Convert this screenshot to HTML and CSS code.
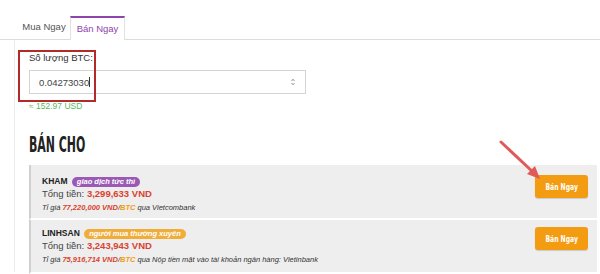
FILE: index.html
```html
<!DOCTYPE html>
<html lang="vi">
<head>
    <meta charset="UTF-8">
    <title>Bán Ngay</title>
    <link rel="stylesheet" href="styles.css">
</head>
<body>

<div class="tabs">
    <div class="tab">Mua Ngay</div>
    <div class="tab active">Bán Ngay</div>
</div>

<div class="panel">
    <div class="amount">
        <label for="btc-amount">Số lượng BTC:</label>
        <div class="input-box">
            <span class="value">0.04273030<span class="caret"></span></span>
            <span class="spinner">
                <svg width="4" height="8" viewBox="0 0 4 8"><path d="M0.5 3 L2 1.2 L3.5 3 M0.5 5 L2 6.8 L3.5 5" fill="none" stroke="#888" stroke-width="0.9"/></svg>
            </span>
        </div>
        <div class="usd">≈ 152.97 USD</div>
    </div>

    <h2><span>BÁN CHO</span></h2>

    <div class="offer">
        <div class="offer-info">
            <div class="name">KHAM <span class="badge purple">giao dịch tức thì</span></div>
            <div class="total">Tổng tiền: <b>3,299,633 VND</b></div>
            <div class="rate">Tỉ giá <b class="red">77,220,000 VND</b>/<b class="orange">BTC</b> qua Vietcombank</div>
        </div>
        <button><span>Bán Ngay</span></button>
    </div>

    <div class="offer">
        <div class="offer-info">
            <div class="name">LINHSAN <span class="badge yellow">người mua thường xuyên</span></div>
            <div class="total">Tổng tiền: <b>3,243,943 VND</b></div>
            <div class="rate">Tỉ giá <b class="red">75,916,714 VND</b>/<b class="orange">BTC</b> qua Nộp tiền mặt vào tài khoản ngân hàng: Vietinbank</div>
        </div>
        <button><span>Bán Ngay</span></button>
    </div>
</div>

<!-- annotations drawn over the page -->
<div class="mark-box"></div>
<svg class="mark-arrow" width="60" height="60" viewBox="0 0 60 60">
    <line x1="9" y1="9" x2="42" y2="40" stroke="#e05a5a" stroke-width="3" stroke-linecap="round"/>
    <polygon points="48,46 35,41 43,33" fill="#e05a5a"/>
</svg>

</body>
</html>
```

FILE: styles.css
```css
body {
    margin: 0;
    font-family: "Liberation Sans", Arial, sans-serif;
    color: #333;
    background: #fff;
    position: relative;
    height: 274px;
    overflow: hidden;
}
.tabs {
    display: flex;
    margin-top: 16px;
    padding-left: 14px;
    border-bottom: 1px solid #dcdcdc;
    height: 23px;
}
.tab {
    width: 52px;
    padding-left: 4px;
    font-size: 9.5px;
    color: #555;
    text-align: center;
    line-height: 22px;
}
.tab.active {
    width: 53px;
    padding-left: 0;
    color: #8e44ad;
    border-top: 2px solid #8e44ad;
    border-left: 1px solid #e2e2e2;
    border-right: 1px solid #e2e2e2;
    background: #fff;
    margin-bottom: -1px;
    line-height: 21px;
}
.panel {
    margin-left: 14px;
    border-left: 1px solid #ececec;
    padding: 12px 3px 0 14px;
    height: 220px;
}
.amount label {
    display: block;
    font-size: 9.5px;
    color: #333;
    line-height: 12px;
}
.input-box {
    margin-top: 6px;
    height: 22px;
    border: 1px solid #d4d4d4;
    display: flex;
    align-items: center;
    justify-content: space-between;
    padding: 0 10px 0 9px;
    width: 256px;
}
.value {
    font-size: 9.5px;
    color: #444;
}
.caret {
    display: inline-block;
    width: 1px;
    height: 10px;
    background: #333;
    vertical-align: -1px;
}
.spinner {
    display: flex;
}
.usd {
    margin-top: 7px;
    font-size: 8.5px;
    color: #5cb85c;
}
h2 {
    margin: 23px 0 9px;
    font-family: "DejaVu Sans Condensed", sans-serif;
    font-weight: bold;
    font-size: 21px;
    line-height: 22px;
    color: #222;
}
h2 span {
    display: inline-block;
    transform: scaleX(0.58);
    transform-origin: left center;
}
.offer {
    display: flex;
    align-items: flex-start;
    justify-content: space-between;
    background: #eeeeee;
    border-left: 2px solid #cfcfcf;
    border-bottom: 2px solid #fff;
    padding: 10px 9px 0 11px;
    height: 43px;
}
.offer + .offer {
    padding-top: 7px;
    height: 45px;
}
.offer-info {
    font-size: 9.5px;
    line-height: 12px;
}
.name {
    font-weight: bold;
    font-size: 8.5px;
    color: #222;
}
.badge {
    display: inline-block;
    font-style: italic;
    font-size: 7.5px;
    line-height: 10px;
    color: #fff;
    padding: 0 5px;
    border-radius: 6px;
    margin-left: 2px;
}
.badge.purple {
    background: #9b59b6;
}
.badge.yellow {
    background: #f0ad3a;
}
.total {
    color: #444;
    margin-top: 1px;
}
.total b {
    color: #d9432f;
}
.rate {
    font-style: italic;
    font-size: 7.5px;
    color: #333;
    margin-top: 2px;
}
.rate .red {
    color: #d9432f;
}
.rate .orange {
    color: #f39c12;
}
button {
    margin-top: 0;
    width: 53px;
    height: 23px;
    border: none;
    border-radius: 3px;
    background: #f39c12;
    color: #fff;
    font-family: "DejaVu Sans Condensed", sans-serif;
    font-weight: bold;
    font-size: 9px;
    box-shadow: 0 1px 1px rgba(0, 0, 0, 0.15);
    padding: 0;
}
button span {
    display: inline-block;
    transform: scaleX(0.75);
}
.mark-box {
    position: absolute;
    left: 18px;
    top: 50px;
    width: 74px;
    height: 48px;
    border: 2px solid #b22a2a;
}
.mark-arrow {
    position: absolute;
    left: 492px;
    top: 133px;
}
```
